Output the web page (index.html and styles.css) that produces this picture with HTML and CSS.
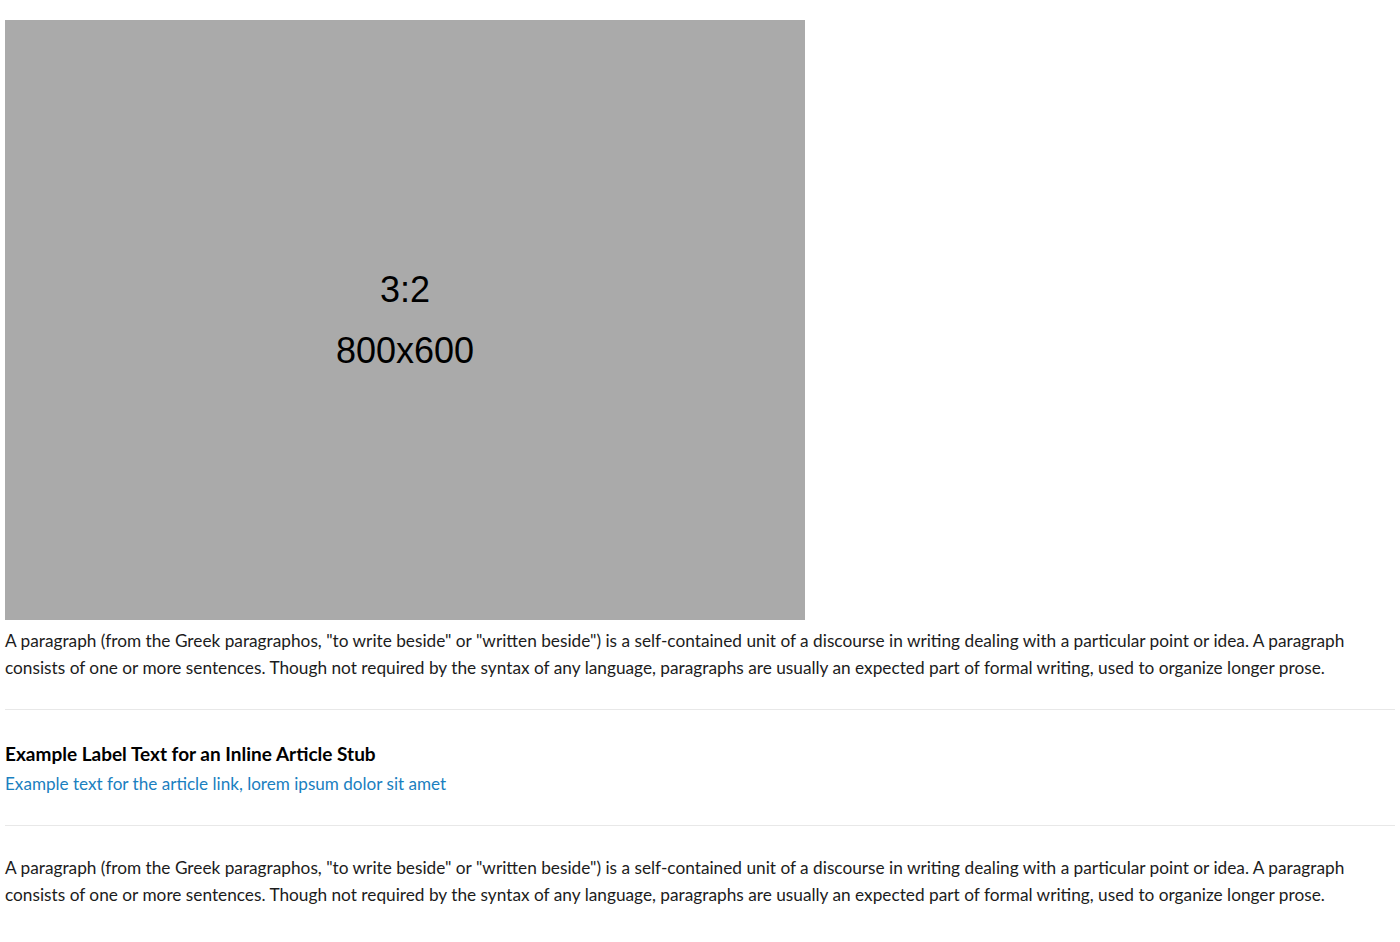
FILE: index.html
```html
<!DOCTYPE html>
<html lang="en">
<head>
<meta charset="utf-8">
<title>Article</title>
<link rel="stylesheet" href="styles.css">
</head>
<body>
<main class="page">
  <div class="placeholder">
    <span class="ratio">3:2</span>
    <span class="size">800x600</span>
  </div>
  <p class="para">A paragraph (from the Greek paragraphos, "to write beside" or "written beside") is a self-contained unit of a discourse in writing dealing with a particular point or idea. A paragraph consists of one or more sentences. Though not required by the syntax of any language, paragraphs are usually an expected part of formal writing, used to organize longer prose.</p>
  <section class="stub">
    <h3 class="stub-label">Example Label Text for an Inline Article Stub</h3>
    <a class="stub-link" href="#">Example text for the article link, lorem ipsum dolor sit amet</a>
  </section>
  <p class="para">A paragraph (from the Greek paragraphos, "to write beside" or "written beside") is a self-contained unit of a discourse in writing dealing with a particular point or idea. A paragraph consists of one or more sentences. Though not required by the syntax of any language, paragraphs are usually an expected part of formal writing, used to organize longer prose.</p>
</main>
</body>
</html>
```
FILE: styles.css
```css
html, body {
  margin: 0;
  padding: 0;
  background: #fff;
}
.page {
  padding: 20px 5px 0;
  font-family: "Lato", "Open Sans", sans-serif;
  color: #1c1c1c;
}
.placeholder {
  width: 800px;
  height: 600px;
  background: #aaaaaa;
  display: flex;
  flex-direction: column;
  align-items: center;
  justify-content: center;
  font-family: "Liberation Sans", Arial, sans-serif;
  color: #000;
}
.ratio {
  font-size: 36px;
  line-height: 62px;
}
.size {
  font-size: 36px;
  line-height: 60px;
}
.para {
  margin: 7px 0 0;
  font-size: 17.25px;
  line-height: 27px;
}
.stub {
  margin-top: 28px;
  border-top: 1px solid #e8e8e8;
  border-bottom: 1px solid #e8e8e8;
  padding: 32px 0 29px;
  margin-bottom: 28px;
}
.stub-label {
  margin: 0 0 6px;
  font-size: 19px;
  line-height: 24px;
  font-weight: 700;
  color: #000;
}
.stub-link {
  display: block;
  font-size: 17.1px;
  line-height: 24px;
  color: #1a80c0;
  text-decoration: none;
}
```
